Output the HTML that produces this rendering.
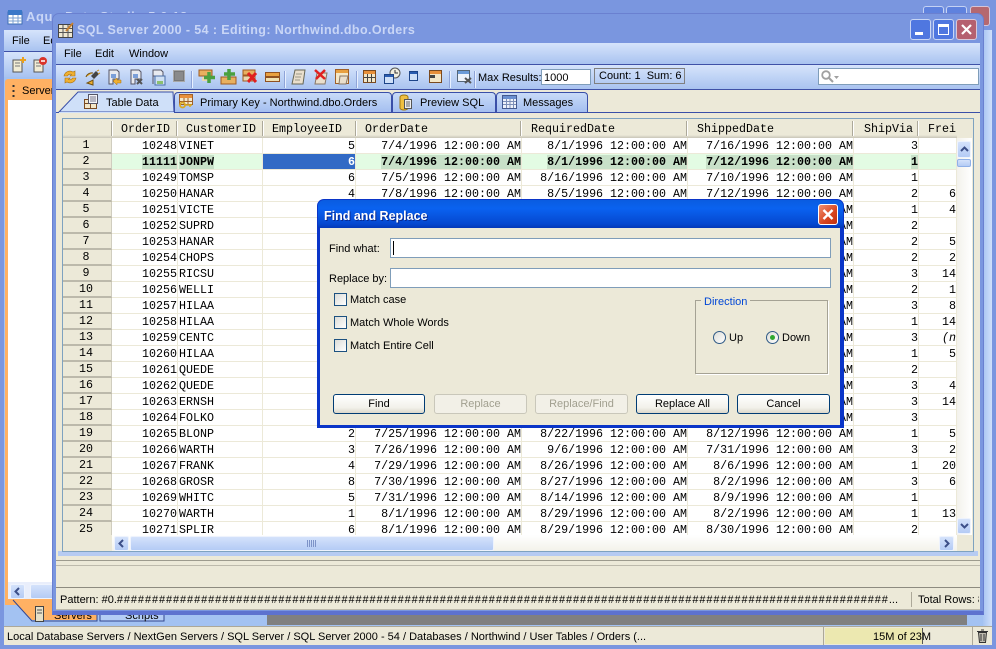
<!DOCTYPE html>
<html><head><meta charset="utf-8"><style>
html,body{margin:0;padding:0;width:996px;height:649px;overflow:hidden;background:#7a96df}
body{position:relative;font:11px "Liberation Sans",sans-serif;color:#000}
.a{position:absolute;box-sizing:border-box;white-space:nowrap}
.t{position:absolute;white-space:nowrap;line-height:14px;margin-top:1px}
.m{font:11.67px/14px "Liberation Mono",monospace}
.bar{background:linear-gradient(#d6e4fb,#a9c3f0)}
.tab{position:absolute;box-sizing:border-box;top:92px;height:20px;background:linear-gradient(#c9dbf8,#a4bff0);border:1px solid #3a4fa8;border-bottom:0;border-radius:4px 4px 0 0}
table{position:absolute;border-collapse:separate;border-spacing:0;table-layout:fixed}
td{height:16px;padding:1px 0 0;box-sizing:border-box;border-right:1px solid #ece9d8;border-bottom:1px solid #ece9d8;background:#fff;font:11.67px/14px "Liberation Mono",monospace;text-align:right;overflow:hidden;white-space:nowrap;color:#000}
td.h{background:#ece9d8;text-align:center;padding:0 2px 0 0;border-bottom:2px solid #bcb9ab;border-right:1px solid #d0cdbf}
td.l{text-align:left;padding-left:1px}
tr.s td{background:#e3fbe3;font-weight:bold}
tr.s td.h{background:#ece9d8;font-weight:normal}
tr.s b{background:#c8e0c8;display:inline-block;height:14px;vertical-align:top}
tr.s td.sel{background:#316ac5;color:#fff}
.sep{position:absolute;top:71px;width:1px;height:17px;background:#8fa4d8;border-right:1px solid #e8f0ff}
.hs{position:absolute;top:121px;width:1px;height:15px;background:#aca899;border-right:1px solid #fff}
.btn{position:absolute;box-sizing:border-box;top:394px;height:20px;width:93px;border:1px solid #003c74;border-radius:3px;background:linear-gradient(#fff,#f2f1ea 70%,#dcd8cb);text-align:center;line-height:18px}
.btn.d{border-color:#c9c7ba;background:#f2f0e7;color:#a19f8f}
.cb{position:absolute;box-sizing:border-box;left:334px;width:13px;height:13px;border:1px solid #1c5180;background:linear-gradient(135deg,#dcdcd7,#fff)}
.sb{position:absolute;box-sizing:border-box;background:linear-gradient(#d4e2fb,#b4cbf5);border:1px solid #eef3fd;border-radius:2px;color:#3c4f88}
svg{position:absolute;overflow:visible}
</style></head><body>

<!-- back window -->
<div class="a" style="left:0;top:0;width:996px;height:649px;background:#7a96df;border-radius:7px 7px 0 0"></div>
<svg style="left:7px;top:9px" width="16" height="16"><rect x="1" y="3" width="14" height="12" fill="#fff" stroke="#3f6fb5"/><rect x="1" y="1" width="14" height="5" fill="#3a78c8"/><path d="M1 9h14M1 12h14M6 6v9M11 6v9" stroke="#7ba0d0"/></svg>
<div class="t" style="left:26px;top:10px;margin-top:0;font-weight:bold;font-size:13px;letter-spacing:.6px;color:#c9d6f6">Aqua Data Studio 5.0.12</div>
<div class="a" style="left:923px;top:6px;width:21px;height:20px;background:#5f82de;border:1px solid #c5d2f4;border-radius:3px"></div>
<div class="a" style="left:946px;top:6px;width:21px;height:20px;background:#5f82de;border:1px solid #c5d2f4;border-radius:3px"></div>
<div class="a" style="left:970px;top:6px;width:20px;height:20px;background:#b5686f;border:1px solid #d5c5d8;border-radius:3px"></div>
<div class="a bar" style="left:4px;top:30px;width:988px;height:21px"></div>
<div class="t" style="left:12px;top:33px">File</div><div class="t" style="left:43px;top:33px">Edit</div>
<div class="a" style="left:4px;top:51px;width:988px;height:1px;background:#3f51a7"></div>
<div class="a bar" style="left:4px;top:52px;width:988px;height:25px"></div>
<div class="a" style="left:4px;top:77px;width:988px;height:549px;background:#a3c2f2"></div>
<div class="a" style="left:983px;top:30px;width:9px;height:596px;background:linear-gradient(90deg,#a8c4f2,#cfe0fa)"></div>
<svg style="left:12px;top:57px" width="14" height="16"><rect x="1" y="3" width="9" height="12" fill="#f1ecd5" stroke="#555"/><path d="M3 6h5M3 9h5" stroke="#777"/><path d="M11 0v6M8 3h6" stroke="#e8a020" stroke-width="2"/></svg>
<svg style="left:33px;top:57px" width="14" height="16"><rect x="1" y="3" width="9" height="12" fill="#f1ecd5" stroke="#555"/><path d="M3 6h5M3 9h5" stroke="#777"/><circle cx="10" cy="4" r="4" fill="#d9342b"/><path d="M8 4h4" stroke="#fff" stroke-width="1.5"/></svg>
<div class="a" style="left:5px;top:79px;width:60px;height:526px;background:#ffb163;border-radius:3px 0 0 0"></div>
<div class="a" style="left:8px;top:100px;width:50px;height:482px;background:#fff"></div>
<div class="a" style="left:8px;top:582px;width:50px;height:17px;background:#e9eefb"></div>
<div class="sb" style="left:10px;top:584px;width:15px;height:15px"></div>
<svg style="left:14px;top:587px" width="6" height="9"><path d="M5 1L1.500 4.500 5 8" fill="none" stroke="#3c4f88" stroke-width="2"/></svg>
<div class="sb" style="left:30px;top:584px;width:30px;height:15px"></div>
<div class="t" style="left:22px;top:83px">Server</div>
<svg style="left:12px;top:84px" width="4" height="14"><path d="M1.500 1v2M1.500 6v2M1.500 11v2" stroke="#333" stroke-width="2"/></svg>
<svg style="left:0;top:598px" width="170" height="26"><path d="M13 2L32 22H97V2Z" fill="#ffb163" stroke="none"/><path d="M13 2L32 23H97V2" fill="none" stroke="#33468f"/><path d="M100 4V23H164V4Z" fill="#b4cdf5" stroke="#33468f"/></svg>
<svg style="left:35px;top:606px" width="10" height="16"><rect x=".5" y=".5" width="8" height="15" fill="#e6e0c8" stroke="#444"/><path d="M2 4h5M2 7h5" stroke="#555"/></svg>
<div class="t" style="left:54px;top:608px">Servers</div>
<div class="t" style="left:125px;top:608px">Scripts</div>
<div class="a" style="left:267px;top:615px;width:700px;height:10px;background:#808080"></div>
<div class="a" style="left:4px;top:626px;width:988px;height:19px;background:#ece9d8;border-top:1px solid #aca899"></div>
<div class="t" style="left:7px;top:629px">Local Database Servers / NextGen Servers / SQL Server / SQL Server 2000 - 54 / Databases / Northwind / User Tables / Orders (...</div>
<div class="a" style="left:823px;top:627px;width:1px;height:18px;background:#aca899"></div>
<div class="a" style="left:825px;top:628px;width:97px;height:16px;background:#ece8b0"></div>
<div class="a" style="left:922px;top:628px;width:1px;height:16px;background:#555"></div>
<div class="t" style="left:873px;top:629px">15M of 23M</div>
<div class="a" style="left:972px;top:627px;width:1px;height:18px;background:#aca899"></div>
<svg style="left:976px;top:629px" width="13" height="15"><path d="M2.500 3.500h8l-1 10h-6zM1 2.500h11M5 1h3M5 5v7M8 5v7" fill="#c0bdb0" stroke="#333"/></svg>

<!-- front window -->
<div class="a" style="left:52px;top:13px;width:932px;height:602px;background:#7a96df;border:1px solid #6a80d0;border-radius:7px 7px 0 0;border-bottom:4px solid #5d72cf"></div>
<svg style="left:58px;top:22px" width="16" height="16"><rect x=".5" y="2.500" width="14" height="13" fill="#efe8d2" stroke="#444"/><path d="M1 6.500h13M1 10.500h13M5 3v12M10 3v12" stroke="#555"/><path d="M8 9L15 1" stroke="#c88030" stroke-width="2"/></svg>
<div class="t" style="left:77px;top:23px;margin-top:0;font-weight:bold;font-size:12.500px;letter-spacing:.39px;color:#c9d6f6">SQL Server 2000 - 54 : Editing: Northwind.dbo.Orders</div>
<div class="a" style="left:910px;top:19px;width:21px;height:21px;background:#4f77e0;border:1px solid #c9d6f5;border-radius:3px"></div><div class="a" style="left:915px;top:32px;width:8px;height:3px;background:#fff"></div>
<div class="a" style="left:933px;top:19px;width:21px;height:21px;background:#4f77e0;border:1px solid #c9d6f5;border-radius:3px"></div><div class="a" style="left:938px;top:24px;width:11px;height:11px;border:1px solid #fff;border-top-width:3px"></div>
<div class="a" style="left:956px;top:19px;width:21px;height:21px;background:#b5606f;border:1px solid #d8c8d8;border-radius:3px"></div>
<svg style="left:956px;top:19px" width="21" height="21"><path d="M6 6l9 9M15 6l-9 9" stroke="#fff" stroke-width="2.200"/></svg>

<div class="a bar" style="left:56px;top:43px;width:924px;height:21px"></div>
<div class="t" style="left:64px;top:46px">File</div><div class="t" style="left:95px;top:46px">Edit</div><div class="t" style="left:129px;top:46px">Window</div>
<div class="a" style="left:56px;top:64px;width:924px;height:1px;background:#3f51a7"></div>
<div class="a bar" style="left:56px;top:65px;width:924px;height:24px"></div>
<div class="a" style="left:56px;top:89px;width:924px;height:1px;background:#3f51a7"></div>
<div class="a" style="left:56px;top:90px;width:924px;height:520px;background:#ece9d8"></div>

<!-- toolbar icons -->
<svg style="left:62px;top:69px" width="16" height="16"><path d="M2 7a6 6 0 0 1 9-4l2-1v5h-5l1.500-1.500a3 3 0 0 0-4 1.500zM14 9a6 6 0 0 1-9 4l-2 1V9h5L6.500 10.500a3 3 0 0 0 4-1.500z" fill="#f0b030" stroke="#a87010" stroke-width=".6"/></svg>
<svg style="left:84px;top:69px" width="16" height="17"><path d="M2 8a6 6 0 0 1 7-4M3 14l6 2v-5z" fill="#f0b030" stroke="#705010"/><path d="M7 7l5-5 3 3-5 5z" fill="#444"/><path d="M13 2l2-1M14 5l2-1" stroke="#d09020"/></svg>
<svg style="left:106px;top:69px" width="16" height="16"><path d="M3 1h8l2 2v7H7v5H3z" fill="#e8eaf0" stroke="#556"/><rect x="5" y="5" width="5" height="4" fill="#7b9fd8"/><path d="M7 12l4-3v2h4v3h-4v2z" fill="#f0b030" stroke="#a87010" stroke-width=".5"/></svg>
<svg style="left:128px;top:69px" width="16" height="16"><path d="M3 1h8l2 2v7H7v5H3z" fill="#e8eaf0" stroke="#556"/><rect x="5" y="5" width="5" height="4" fill="#7b9fd8"/><path d="M9 10l5 5M14 10l-5 5" stroke="#555" stroke-width="2"/></svg>
<svg style="left:150px;top:69px" width="16" height="16"><path d="M3 1h8l2 2v4H3zM3 7v8" fill="#e8eaf0" stroke="#556"/><rect x="5" y="7" width="10" height="9" fill="#cfe0f4" stroke="#4a6ea8"/><rect x="7" y="12" width="6" height="3" fill="#8cc070"/></svg>
<div class="a" style="left:173px;top:70px;width:12px;height:12px;background:#8a8a8a;border:1px solid #a8a8a8;box-shadow:inset 0 0 0 1px #777"></div>
<div class="sep" style="left:191px"></div>
<svg style="left:199px;top:70px" width="16" height="14"><rect x="0" y="0" width="13" height="6" fill="#e8b060" stroke="#a05a20"/><rect x="3" y="7" width="8" height="4" fill="#e8d8b0"/><path d="M10 2v11M5 7.500h11" stroke="#4aa040" stroke-width="3.500"/></svg>
<svg style="left:221px;top:69px" width="16" height="15"><rect x="0" y="8" width="15" height="7" fill="#e8b060" stroke="#a05a20"/><path d="M8 0v11M3 5h11" stroke="#4aa040" stroke-width="3.500"/></svg>
<svg style="left:243px;top:70px" width="16" height="14"><rect x="0" y="0" width="12" height="5" fill="#e8b060" stroke="#a05a20"/><rect x="0" y="6" width="12" height="5" fill="#e8d8b0" stroke="#a05a20"/><path d="M5 3l8 9M13 3l-8 9" stroke="#e02020" stroke-width="3"/></svg>
<svg style="left:265px;top:72px" width="15" height="11"><rect x=".5" y=".5" width="14" height="4" fill="#e8a040" stroke="#905020"/><rect x=".5" y="5.500" width="14" height="4" fill="#f0e0b0" stroke="#905020"/></svg>
<div class="sep" style="left:284px"></div>
<svg style="left:291px;top:69px" width="16" height="16"><path d="M4 1h10l-2 14H1z" fill="#eadfcc" stroke="#665"/><path d="M5 5h6M4 8h6M4 11h5" stroke="#998"/></svg>
<svg style="left:313px;top:69px" width="16" height="16"><path d="M4 4h10l-2 11H2z" fill="#eadfcc" stroke="#876"/><path d="M2 1l10 9M12 1L3 10" stroke="#e02020" stroke-width="2.500"/></svg>
<svg style="left:335px;top:69px" width="15" height="16"><rect x=".5" y=".5" width="13" height="14" fill="#f3e7c8" stroke="#a06028"/><rect x="1" y="1" width="12" height="3" fill="#e8a040"/><path d="M5 7h8l-2 8H4z" fill="#eadfcc" stroke="#876"/></svg>
<div class="sep" style="left:356px"></div>
<svg style="left:363px;top:70px" width="13" height="13"><rect x=".5" y=".5" width="12" height="12" fill="#f3e7c8" stroke="#7a4a20"/><rect x="1" y="1" width="11" height="3" fill="#e8903a"/><path d="M1 7.500h11M4.500 4v8M8.500 4v8" stroke="#444"/></svg>
<svg style="left:384px;top:68px" width="17" height="16"><circle cx="11" cy="5" r="5" fill="#f0eee0" stroke="#555"/><path d="M11 2v3h3" fill="none" stroke="#333"/><rect x=".5" y="6.500" width="9" height="9" fill="#cfe0f8" stroke="#1c4488"/><rect x="1" y="7" width="8" height="2" fill="#2a5cb0"/></svg>
<svg style="left:409px;top:71px" width="9" height="10"><rect x=".5" y=".5" width="8" height="9" fill="#cfe0f8" stroke="#1c4488"/><rect x="1" y="1" width="7" height="2" fill="#2a5cb0"/></svg>
<svg style="left:429px;top:70px" width="13" height="13"><rect x=".5" y=".5" width="12" height="12" fill="#f3e7c8" stroke="#7a4a20"/><rect x="1" y="1" width="11" height="3" fill="#e8903a"/><rect x="1" y="5" width="5" height="3" fill="#444"/></svg>
<div class="sep" style="left:449px"></div>
<svg style="left:457px;top:70px" width="15" height="14"><rect x=".5" y=".5" width="12" height="11" fill="#eef3fb" stroke="#567"/><rect x="1" y="1" width="11" height="3" fill="#6c9bd8"/><path d="M8 8l6 5M14 8l-6 5" stroke="#555" stroke-width="2"/></svg>
<div class="sep" style="left:474px"></div>
<div class="t" style="left:478px;top:70px">Max Results:</div>
<div class="a" style="left:541px;top:69px;width:50px;height:16px;background:#fff;border:1px solid #7f9db9;padding-left:2px;line-height:16px">1000</div>
<div class="a" style="left:594px;top:68px;width:91px;height:16px;border:1px solid #808080;padding-left:4px;line-height:14px">Count: 1&nbsp; Sum: 6</div>
<div class="a" style="left:818px;top:68px;width:161px;height:17px;background:#fff;border:1px solid #7f9db9"></div>
<svg style="left:821px;top:70px" width="20" height="13"><circle cx="5" cy="5" r="3.800" fill="none" stroke="#a0a0a0" stroke-width="1.800"/><path d="M8 8l4 4" stroke="#a0a0a0" stroke-width="2"/><path d="M13 6h5l-2.500 3z" fill="#a0a0a0"/></svg>

<!-- tabs -->
<div class="a" style="left:56px;top:112px;width:924px;height:1px;background:#3a4fa8"></div>
<svg style="left:56px;top:90px" width="120" height="23"><path d="M3 22L22 2H117L118 22Z" fill="#cfe0f9" stroke="#3a4fa8"/><path d="M3 22.500H118" stroke="#cfe0f9"/></svg>
<div class="tab" style="left:174px;width:218px"></div>
<div class="tab" style="left:392px;width:104px"></div>
<div class="tab" style="left:496px;width:92px"></div>
<svg style="left:84px;top:94px" width="14" height="15"><rect x=".5" y="5.500" width="12" height="9" fill="#f3e7c8" stroke="#7a4a20"/><path d="M1 9.500h11M6.500 6v8" stroke="#7a4a20"/><rect x="4.500" y=".5" width="9" height="9" fill="#f5f6fa" stroke="#556"/><path d="M6 3h6M6 5h6M6 7h6" stroke="#778"/></svg>
<div class="t" style="left:106px;top:95px">Table Data</div>
<svg style="left:179px;top:94px" width="14" height="15"><rect x=".5" y=".5" width="13" height="10" fill="#f3e7c8" stroke="#a06028"/><rect x="1" y="1" width="12" height="3" fill="#e8903a"/><path d="M1 7.500h12M5 4v7M9 4v7" stroke="#a06028"/><circle cx="3.500" cy="11" r="2.500" fill="none" stroke="#d8a820" stroke-width="1.800"/><path d="M6 11h7M11 11v2" stroke="#d8a820" stroke-width="1.500"/></svg>
<div class="t" style="left:200px;top:95px">Primary Key - Northwind.dbo.Orders</div>
<svg style="left:399px;top:94px" width="13" height="16"><path d="M1 3a4 2 0 0 1 8 0v11a4 2 0 0 1-8 0z" fill="#f0c040" stroke="#a07810"/><rect x="5.500" y="5.500" width="7" height="9" fill="#eee" stroke="#555"/><path d="M7 8h4M7 10h4M7 12h4" stroke="#666"/></svg>
<div class="t" style="left:420px;top:95px">Preview SQL</div>
<svg style="left:502px;top:95px" width="15" height="14"><rect x=".5" y=".5" width="14" height="13" fill="#eef2fa" stroke="#445a90"/><rect x="1" y="1" width="13" height="3" fill="#6a8fd0"/><path d="M1 6.500h13M1 9.500h13M4.500 4v9M8 4v9M11.500 4v9" stroke="#7c8fb8"/></svg>
<div class="t" style="left:523px;top:95px">Messages</div>

<!-- content -->
<div class="a" style="left:58px;top:113px;width:920px;height:443px;background:#ece9d8;border-bottom:5px solid #b6cbf2"></div>
<div class="a" style="left:62px;top:118px;width:912px;height:434px;background:#ece9d8;border:1px solid #7ea2c0"></div>
<div class="a" style="left:957px;top:138px;width:15px;height:397px;background:linear-gradient(90deg,#f3f2ec,#fff)"></div>
<div class="a" style="left:63px;top:135px;width:894px;height:3px;background:linear-gradient(#ece9d8,#c8c5b7)"></div>

<div class="hs" style="left:111px"></div><div class="hs" style="left:176px"></div><div class="hs" style="left:262px"></div><div class="hs" style="left:355px"></div><div class="hs" style="left:520px"></div><div class="hs" style="left:686px"></div><div class="hs" style="left:852px"></div><div class="hs" style="left:917px"></div>
<div class="t m" style="left:121px;top:121px">OrderID</div>
<div class="t m" style="left:186px;top:121px">CustomerID</div>
<div class="t m" style="left:272px;top:121px">EmployeeID</div>
<div class="t m" style="left:365px;top:121px">OrderDate</div>
<div class="t m" style="left:531px;top:121px">RequiredDate</div>
<div class="t m" style="left:697px;top:121px">ShippedDate</div>
<div class="t m" style="left:864px;top:121px">ShipVia</div>
<div class="t m" style="left:928px;top:121px">Frei</div>

<div class="a" style="left:63px;top:138px;width:894px;height:397px;overflow:hidden">
<table style="left:0;top:0;width:894px">
<colgroup><col style="width:49px"><col style="width:66px"><col style="width:85px"><col style="width:93px"><col style="width:166px"><col style="width:166px"><col style="width:166px"><col style="width:65px"><col style="width:38px"></colgroup>
<tr><td class="h">1</td><td>10248</td><td class="l">VINET</td><td>5</td><td>7/4/1996 12:00:00 AM</td><td>8/1/1996 12:00:00 AM</td><td>7/16/1996 12:00:00 AM</td><td>3</td><td></td></tr>
<tr class="s"><td class="h">2</td><td><b>11111</b></td><td class="l"><b>JONPW</b></td><td class="sel">6</td><td><b>7/4/1996 12:00:00 AM</b></td><td><b>8/1/1996 12:00:00 AM</b></td><td><b>7/12/1996 12:00:00 AM</b></td><td><b>1</b></td><td></td></tr>
<tr><td class="h">3</td><td>10249</td><td class="l">TOMSP</td><td>6</td><td>7/5/1996 12:00:00 AM</td><td>8/16/1996 12:00:00 AM</td><td>7/10/1996 12:00:00 AM</td><td>1</td><td></td></tr>
<tr><td class="h">4</td><td>10250</td><td class="l">HANAR</td><td>4</td><td>7/8/1996 12:00:00 AM</td><td>8/5/1996 12:00:00 AM</td><td>7/12/1996 12:00:00 AM</td><td>2</td><td>6</td></tr>
<tr><td class="h">5</td><td>10251</td><td class="l">VICTE</td><td>3</td><td>7/8/1996 12:00:00 AM</td><td>8/5/1996 12:00:00 AM</td><td>7/15/1996 12:00:00 AM</td><td>1</td><td>4</td></tr>
<tr><td class="h">6</td><td>10252</td><td class="l">SUPRD</td><td>4</td><td>7/9/1996 12:00:00 AM</td><td>8/6/1996 12:00:00 AM</td><td>7/11/1996 12:00:00 AM</td><td>2</td><td></td></tr>
<tr><td class="h">7</td><td>10253</td><td class="l">HANAR</td><td>3</td><td>7/10/1996 12:00:00 AM</td><td>7/24/1996 12:00:00 AM</td><td>7/16/1996 12:00:00 AM</td><td>2</td><td>5</td></tr>
<tr><td class="h">8</td><td>10254</td><td class="l">CHOPS</td><td>5</td><td>7/11/1996 12:00:00 AM</td><td>8/8/1996 12:00:00 AM</td><td>7/23/1996 12:00:00 AM</td><td>2</td><td>2</td></tr>
<tr><td class="h">9</td><td>10255</td><td class="l">RICSU</td><td>9</td><td>7/12/1996 12:00:00 AM</td><td>8/9/1996 12:00:00 AM</td><td>7/15/1996 12:00:00 AM</td><td>3</td><td>14</td></tr>
<tr><td class="h">10</td><td>10256</td><td class="l">WELLI</td><td>3</td><td>7/15/1996 12:00:00 AM</td><td>8/12/1996 12:00:00 AM</td><td>7/17/1996 12:00:00 AM</td><td>2</td><td>1</td></tr>
<tr><td class="h">11</td><td>10257</td><td class="l">HILAA</td><td>4</td><td>7/16/1996 12:00:00 AM</td><td>8/13/1996 12:00:00 AM</td><td>7/22/1996 12:00:00 AM</td><td>3</td><td>8</td></tr>
<tr><td class="h">12</td><td>10258</td><td class="l">HILAA</td><td>1</td><td>7/17/1996 12:00:00 AM</td><td>8/14/1996 12:00:00 AM</td><td>7/23/1996 12:00:00 AM</td><td>1</td><td>14</td></tr>
<tr><td class="h">13</td><td>10259</td><td class="l">CENTC</td><td>4</td><td>7/18/1996 12:00:00 AM</td><td>8/15/1996 12:00:00 AM</td><td>7/25/1996 12:00:00 AM</td><td>3</td><td style="font-style:italic">(n</td></tr>
<tr><td class="h">14</td><td>10260</td><td class="l">HILAA</td><td>4</td><td>7/19/1996 12:00:00 AM</td><td>8/16/1996 12:00:00 AM</td><td>7/29/1996 12:00:00 AM</td><td>1</td><td>5</td></tr>
<tr><td class="h">15</td><td>10261</td><td class="l">QUEDE</td><td>4</td><td>7/19/1996 12:00:00 AM</td><td>8/16/1996 12:00:00 AM</td><td>7/30/1996 12:00:00 AM</td><td>2</td><td></td></tr>
<tr><td class="h">16</td><td>10262</td><td class="l">QUEDE</td><td>8</td><td>7/22/1996 12:00:00 AM</td><td>8/19/1996 12:00:00 AM</td><td>7/25/1996 12:00:00 AM</td><td>3</td><td>4</td></tr>
<tr><td class="h">17</td><td>10263</td><td class="l">ERNSH</td><td>9</td><td>7/23/1996 12:00:00 AM</td><td>8/20/1996 12:00:00 AM</td><td>7/31/1996 12:00:00 AM</td><td>3</td><td>14</td></tr>
<tr><td class="h">18</td><td>10264</td><td class="l">FOLKO</td><td>6</td><td>7/24/1996 12:00:00 AM</td><td>8/21/1996 12:00:00 AM</td><td>8/23/1996 12:00:00 AM</td><td>3</td><td></td></tr>
<tr><td class="h">19</td><td>10265</td><td class="l">BLONP</td><td>2</td><td>7/25/1996 12:00:00 AM</td><td>8/22/1996 12:00:00 AM</td><td>8/12/1996 12:00:00 AM</td><td>1</td><td>5</td></tr>
<tr><td class="h">20</td><td>10266</td><td class="l">WARTH</td><td>3</td><td>7/26/1996 12:00:00 AM</td><td>9/6/1996 12:00:00 AM</td><td>7/31/1996 12:00:00 AM</td><td>3</td><td>2</td></tr>
<tr><td class="h">21</td><td>10267</td><td class="l">FRANK</td><td>4</td><td>7/29/1996 12:00:00 AM</td><td>8/26/1996 12:00:00 AM</td><td>8/6/1996 12:00:00 AM</td><td>1</td><td>20</td></tr>
<tr><td class="h">22</td><td>10268</td><td class="l">GROSR</td><td>8</td><td>7/30/1996 12:00:00 AM</td><td>8/27/1996 12:00:00 AM</td><td>8/2/1996 12:00:00 AM</td><td>3</td><td>6</td></tr>
<tr><td class="h">23</td><td>10269</td><td class="l">WHITC</td><td>5</td><td>7/31/1996 12:00:00 AM</td><td>8/14/1996 12:00:00 AM</td><td>8/9/1996 12:00:00 AM</td><td>1</td><td></td></tr>
<tr><td class="h">24</td><td>10270</td><td class="l">WARTH</td><td>1</td><td>8/1/1996 12:00:00 AM</td><td>8/29/1996 12:00:00 AM</td><td>8/2/1996 12:00:00 AM</td><td>1</td><td>13</td></tr>
<tr><td class="h">25</td><td>10271</td><td class="l">SPLIR</td><td>6</td><td>8/1/1996 12:00:00 AM</td><td>8/29/1996 12:00:00 AM</td><td>8/30/1996 12:00:00 AM</td><td>2</td><td></td></tr>
</table></div>

<!-- scrollbars -->
<div class="sb" style="left:957px;top:141px;width:14px;height:17px"></div>
<svg style="left:960px;top:146px" width="9" height="6"><path d="M1 5l3.500-3.500L8 5" fill="none" stroke="#3c4f88" stroke-width="2"/></svg>
<div class="sb" style="left:957px;top:159px;width:14px;height:8px;border-color:#8fb0e8"></div>
<div class="sb" style="left:957px;top:518px;width:14px;height:16px"></div>
<svg style="left:960px;top:523px" width="9" height="6"><path d="M1 1l3.500 3.500L8 1" fill="none" stroke="#3c4f88" stroke-width="2"/></svg>
<div class="a" style="left:112px;top:535px;width:845px;height:16px;background:linear-gradient(#fff,#f3f2ea)"></div>
<div class="sb" style="left:114px;top:536px;width:15px;height:15px"></div>
<svg style="left:118px;top:539px" width="6" height="9"><path d="M5 1L1.500 4.500 5 8" fill="none" stroke="#3c4f88" stroke-width="2"/></svg>
<div class="sb" style="left:130px;top:536px;width:364px;height:15px"></div>
<svg style="left:307px;top:540px" width="9" height="7"><path d="M.5 0v7M2.500 0v7M4.500 0v7M6.500 0v7M8.500 0v7" stroke="#7d93c8"/></svg>
<div class="sb" style="left:939px;top:536px;width:15px;height:15px"></div>
<svg style="left:944px;top:539px" width="6" height="9"><path d="M1 1l3.500 3.500L1 8" fill="none" stroke="#3c4f88" stroke-width="2"/></svg>

<!-- lower panels -->
<div class="a" style="left:56px;top:560px;width:924px;height:6px;background:#ece9d8;border-top:1px solid #9d9b8e;border-bottom:1px solid #bdbaac"></div>
<div class="a" style="left:56px;top:587px;width:924px;height:1px;background:#8d8b80"></div>
<div class="a" style="left:56px;top:609px;width:924px;height:1px;background:#bdbaac"></div>
<div class="a" style="left:60px;top:593px;width:850px;height:15px;overflow:hidden;line-height:15px">Pattern: #0.<span style="letter-spacing:.9px">##############################################################################################################</span>...</div>
<div class="a" style="left:911px;top:592px;width:1px;height:15px;background:#aca899"></div>
<div class="t" style="left:918px;top:592px;width:61px;overflow:hidden">Total Rows: 8</div>

<!-- dialog -->
<div class="a" style="left:317px;top:199px;width:527px;height:229px;background:#0a35c8;border-radius:7px 7px 0 0"></div>
<div class="a" style="left:318px;top:200px;width:525px;height:28px;background:linear-gradient(#0a5ce0,#0a62f0 30%,#0548d0 85%,#0438b8);border-radius:6px 6px 0 0"></div>
<div class="a" style="left:320px;top:228px;width:520px;height:197px;background:#ece9d8"></div>
<div class="t" style="left:324px;top:208px;font-weight:bold;font-size:12.500px;color:#fff;text-shadow:1px 1px #0a2a90">Find and Replace</div>
<div class="a" style="left:818px;top:204px;width:20px;height:21px;background:linear-gradient(135deg,#f09070,#d8451f 60%,#c03010);border:1px solid #fff;border-radius:3px"></div>
<svg style="left:818px;top:204px" width="20" height="21"><path d="M5.500 6l9 9M14.500 6l-9 9" stroke="#fff" stroke-width="2.400"/></svg>
<div class="t" style="left:329px;top:241px">Find what:</div>
<div class="a" style="left:390px;top:238px;width:441px;height:20px;background:#fff;border:1px solid #7f9db9"></div>
<div class="a" style="left:393px;top:241px;width:1px;height:14px;background:#000"></div>
<div class="t" style="left:329px;top:271px">Replace by:</div>
<div class="a" style="left:390px;top:268px;width:441px;height:20px;background:#fff;border:1px solid #7f9db9"></div>
<div class="cb" style="top:293px"></div><div class="t" style="left:350px;top:292px">Match case</div>
<div class="cb" style="top:316px"></div><div class="t" style="left:350px;top:315px">Match Whole Words</div>
<div class="cb" style="top:339px"></div><div class="t" style="left:350px;top:338px">Match Entire Cell</div>
<div class="a" style="left:695px;top:300px;width:133px;height:74px;border:1px solid #a5a294;box-shadow:1px 1px #fff"></div>
<div class="t" style="left:701px;top:294px;padding:0 3px;background:#ece9d8;color:#0046d5">Direction</div>
<svg style="left:713px;top:331px" width="13" height="13"><defs><linearGradient id="r" x1="0" y1="0" x2="1" y2="1"><stop offset="0" stop-color="#dcdcd7"/><stop offset="1" stop-color="#fff"/></linearGradient></defs><circle cx="6.500" cy="6.500" r="6" fill="url(#r)" stroke="#2f5a86"/></svg>
<div class="t" style="left:729px;top:330px">Up</div>
<svg style="left:766px;top:331px" width="13" height="13"><circle cx="6.500" cy="6.500" r="6" fill="url(#r)" stroke="#2f5a86"/><circle cx="6.500" cy="6.500" r="2.500" fill="#2fa82f"/></svg>
<div class="t" style="left:782px;top:330px">Down</div>
<div class="btn" style="left:333px;width:92px">Find</div>
<div class="btn d" style="left:434px">Replace</div>
<div class="btn d" style="left:535px">Replace/Find</div>
<div class="btn" style="left:636px">Replace All</div>
<div class="btn" style="left:737px">Cancel</div>
</body></html>
